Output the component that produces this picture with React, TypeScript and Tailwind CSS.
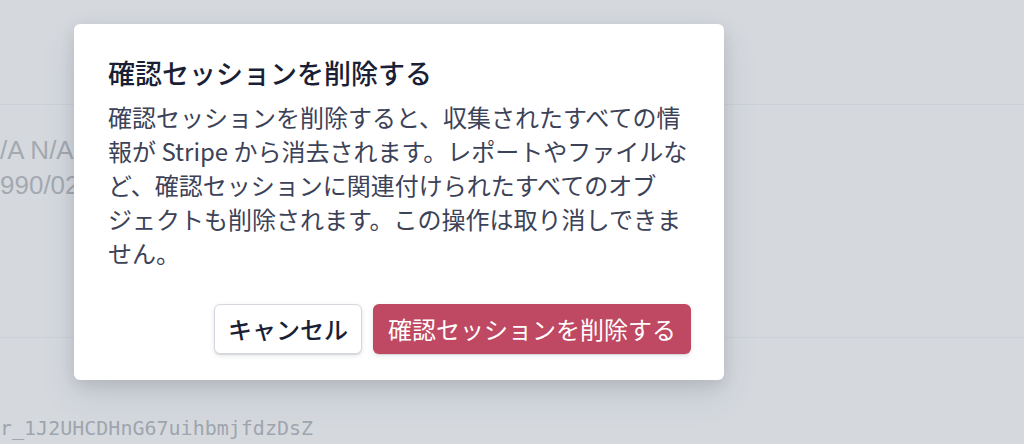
import React from "react";

export default function App() {
  const jp = {
    fontFamily:
      '"Noto Sans CJK JP", "Noto Sans", "Liberation Sans", sans-serif',
  } as React.CSSProperties;
  return (
    <div
      className="relative w-[1024px] h-[444px] overflow-hidden bg-[#d5d9de]"
      style={jp}
    >
      {/* background page */}
      <div className="flex flex-col w-full">
        <div className="h-[105px] border-b border-[#ccd1d9]" />
        <div className="h-[233px] border-b border-[#ccd1d9] flex flex-col pt-[32px] gap-[9px] font-['Liberation_Sans',sans-serif] text-[26px] leading-[26px] text-[#a4a9b1]">
          <div>/A N/A</div>
          <div>990/02</div>
        </div>
        <div className="pt-[78px] font-['DejaVu_Sans_Mono',monospace] text-[20px] leading-[24px] text-[#9fa5ae]">
          r_1J2UHCDHnG67uihbmjfdzDsZ
        </div>
      </div>

      {/* modal */}
      <div className="absolute left-[74px] top-[24px] w-[650px] h-[356px] bg-white rounded-[6px] shadow-[0_15px_35px_0_rgba(60,66,87,0.12),0_5px_15px_0_rgba(0,0,0,0.10)] flex flex-col pl-[34px] pr-[32px] pt-[30px] pb-[26px]">
        <div className="text-[27px] leading-[38px] text-[#1a1f36] font-medium whitespace-nowrap">
          確認セッションを削除する
        </div>
        <div className="mt-[8px] text-[24px] leading-[34px] text-[#3c4257] whitespace-nowrap">
          <div>確認セッションを削除すると、収集されたすべての情</div>
          <div>報が Stripe から消去されます。レポートやファイルな</div>
          <div>ど、確認セッションに関連付けられたすべてのオブ</div>
          <div>ジェクトも削除されます。この操作は取り消しできま</div>
          <div>せん。</div>
        </div>
        <div className="mt-auto flex justify-end gap-[11px] pr-[1px]">
          <button className="h-[50px] w-[148px] flex items-center justify-center rounded-[6px] bg-white border border-[#d5d8de] shadow-[0_2px_5px_0_rgba(60,66,87,0.12),0_1px_1px_0_rgba(0,0,0,0.10)] text-[24px] text-[#1a1f36] font-medium whitespace-nowrap">
            キャンセル
          </button>
          <button className="h-[50px] w-[318px] flex items-center justify-center rounded-[6px] bg-[#bf4862] shadow-[0_2px_5px_0_rgba(60,66,87,0.12),0_1px_1px_0_rgba(0,0,0,0.10)] text-[24px] text-white font-normal whitespace-nowrap">
            確認セッションを削除する
          </button>
        </div>
      </div>
    </div>
  );
}
